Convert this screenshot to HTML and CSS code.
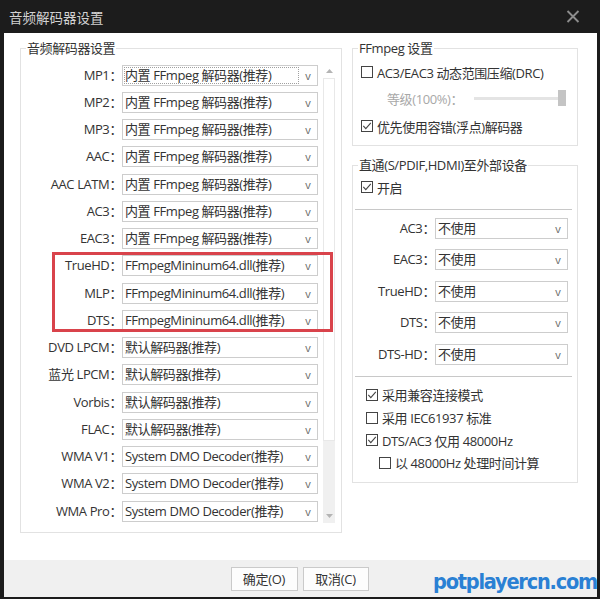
FILE: index.html
```html
<!DOCTYPE html>
<html lang="zh-CN">
<head>
<meta charset="utf-8">
<title>音频解码器设置</title>
<link rel="stylesheet" href="styles.css">
</head>
<body>
<div class="window">
  <div class="titlebar">
    <span class="title">音频解码器设置</span>
    <svg class="close" width="14" height="13" viewBox="0 0 14 13"><path d="M1.5 1 L12.5 12 M12.5 1 L1.5 12" stroke="#8c8c8c" stroke-width="1.9" fill="none"/></svg>
  </div>
  <div class="client">
    <div class="main">
      <fieldset class="group left-group">
        <legend>音频解码器设置</legend>
        <div class="list">
          <div class="rows">
            <div class="row"><span class="lbl">MP1：</span><div class="select focus"><span class="val">内置 FFmpeg 解码器(推荐)</span><span class="arrow">v</span></div></div>
            <div class="row"><span class="lbl">MP2：</span><div class="select"><span class="val">内置 FFmpeg 解码器(推荐)</span><span class="arrow">v</span></div></div>
            <div class="row"><span class="lbl">MP3：</span><div class="select"><span class="val">内置 FFmpeg 解码器(推荐)</span><span class="arrow">v</span></div></div>
            <div class="row"><span class="lbl">AAC：</span><div class="select"><span class="val">内置 FFmpeg 解码器(推荐)</span><span class="arrow">v</span></div></div>
            <div class="row"><span class="lbl">AAC LATM：</span><div class="select"><span class="val">内置 FFmpeg 解码器(推荐)</span><span class="arrow">v</span></div></div>
            <div class="row"><span class="lbl">AC3：</span><div class="select"><span class="val">内置 FFmpeg 解码器(推荐)</span><span class="arrow">v</span></div></div>
            <div class="row"><span class="lbl">EAC3：</span><div class="select"><span class="val">内置 FFmpeg 解码器(推荐)</span><span class="arrow">v</span></div></div>
            <div class="row"><span class="lbl">TrueHD：</span><div class="select"><span class="val">FFmpegMininum64.dll(推荐)</span><span class="arrow">v</span></div></div>
            <div class="row"><span class="lbl">MLP：</span><div class="select"><span class="val">FFmpegMininum64.dll(推荐)</span><span class="arrow">v</span></div></div>
            <div class="row"><span class="lbl">DTS：</span><div class="select"><span class="val">FFmpegMininum64.dll(推荐)</span><span class="arrow">v</span></div></div>
            <div class="row"><span class="lbl">DVD LPCM：</span><div class="select"><span class="val">默认解码器(推荐)</span><span class="arrow">v</span></div></div>
            <div class="row"><span class="lbl">蓝光 LPCM：</span><div class="select"><span class="val">默认解码器(推荐)</span><span class="arrow">v</span></div></div>
            <div class="row"><span class="lbl">Vorbis：</span><div class="select"><span class="val">默认解码器(推荐)</span><span class="arrow">v</span></div></div>
            <div class="row"><span class="lbl">FLAC：</span><div class="select"><span class="val">默认解码器(推荐)</span><span class="arrow">v</span></div></div>
            <div class="row"><span class="lbl">WMA V1：</span><div class="select"><span class="val">System DMO Decoder(推荐)</span><span class="arrow">v</span></div></div>
            <div class="row"><span class="lbl">WMA V2：</span><div class="select"><span class="val">System DMO Decoder(推荐)</span><span class="arrow">v</span></div></div>
            <div class="row"><span class="lbl">WMA Pro：</span><div class="select"><span class="val">System DMO Decoder(推荐)</span><span class="arrow">v</span></div></div>
          </div>
          <div class="scrollbar">
            <div class="sb-btn sb-up"><svg width="7" height="4" viewBox="0 0 7 4"><path d="M0 4 L3.5 0 L7 4 Z" fill="#b4b4b4"/></svg></div>
            <div class="sb-thumb"></div>
            <div class="sb-track"></div>
            <div class="sb-btn sb-down"><svg width="7" height="4" viewBox="0 0 7 4"><path d="M0 0 L3.5 4 L7 0 Z" fill="#b4b4b4"/></svg></div>
          </div>
          <div class="highlight"></div>
        </div>
      </fieldset>

      <div class="right">
        <fieldset class="group ffmpeg">
          <legend>FFmpeg 设置</legend>
          <div class="chk-row r1">
            <svg class="cb" width="12" height="12" viewBox="0 0 12 12"><rect x="0.5" y="0.5" width="11" height="11" fill="#fff" stroke="#444"/></svg>
            <span>AC3/EAC3 动态范围压缩(DRC)</span>
          </div>
          <div class="slider-row">
            <span class="dim">等级(100%)：</span>
            <div class="slider"><div class="track"></div><div class="thumb"></div></div>
          </div>
          <div class="chk-row r3">
            <svg class="cb" width="12" height="12" viewBox="0 0 12 12"><rect x="0.5" y="0.5" width="11" height="11" fill="#fff" stroke="#444"/><path d="M2.3 5.8 L4.8 8.6 L9.8 2.8" stroke="#444" stroke-width="1.1" fill="none"/></svg>
            <span>优先使用容错(浮点)解码器</span>
          </div>
        </fieldset>

        <fieldset class="group pass">
          <legend>直通(S/PDIF,HDMI)至外部设备</legend>
          <div class="chk-row on-row">
            <svg class="cb" width="12" height="12" viewBox="0 0 12 12"><rect x="0.5" y="0.5" width="11" height="11" fill="#fff" stroke="#444"/><path d="M2.3 5.8 L4.8 8.6 L9.8 2.8" stroke="#444" stroke-width="1.1" fill="none"/></svg>
            <span>开启</span>
          </div>
          <div class="sep"></div>
          <div class="sel-rows">
            <div class="prow"><span class="plbl">AC3：</span><div class="select"><span class="val">不使用</span><span class="arrow">v</span></div></div>
            <div class="prow"><span class="plbl">EAC3：</span><div class="select"><span class="val">不使用</span><span class="arrow">v</span></div></div>
            <div class="prow"><span class="plbl">TrueHD：</span><div class="select"><span class="val">不使用</span><span class="arrow">v</span></div></div>
            <div class="prow"><span class="plbl">DTS：</span><div class="select"><span class="val">不使用</span><span class="arrow">v</span></div></div>
            <div class="prow"><span class="plbl">DTS-HD：</span><div class="select"><span class="val">不使用</span><span class="arrow">v</span></div></div>
          </div>
          <div class="sep sep2"></div>
          <div class="opts">
            <div class="opt">
              <svg class="cb" width="12" height="12" viewBox="0 0 12 12"><rect x="0.5" y="0.5" width="11" height="11" fill="#fff" stroke="#444"/><path d="M2.3 5.8 L4.8 8.6 L9.8 2.8" stroke="#444" stroke-width="1.1" fill="none"/></svg>
              <span>采用兼容连接模式</span>
            </div>
            <div class="opt">
              <svg class="cb" width="12" height="12" viewBox="0 0 12 12"><rect x="0.5" y="0.5" width="11" height="11" fill="#fff" stroke="#444"/></svg>
              <span>采用 IEC61937 标准</span>
            </div>
            <div class="opt">
              <svg class="cb" width="12" height="12" viewBox="0 0 12 12"><rect x="0.5" y="0.5" width="11" height="11" fill="#fff" stroke="#444"/><path d="M2.3 5.8 L4.8 8.6 L9.8 2.8" stroke="#444" stroke-width="1.1" fill="none"/></svg>
              <span>DTS/AC3 仅用 48000Hz</span>
            </div>
            <div class="opt indent">
              <svg class="cb" width="12" height="12" viewBox="0 0 12 12"><rect x="0.5" y="0.5" width="11" height="11" fill="#fff" stroke="#444"/></svg>
              <span>以 48000Hz 处理时间计算</span>
            </div>
          </div>
        </fieldset>
      </div>
    </div>
    <div class="footer">
      <button class="btn btn-ok">确定(O)</button>
      <button class="btn btn-cancel">取消(C)</button>
      <span class="watermark">potplayercn.com</span>
    </div>
  </div>
</div>
</body>
</html>
```

FILE: styles.css
```css
* { box-sizing: border-box; }
html, body { margin: 0; padding: 0; }
body {
  width: 600px;
  height: 599px;
  overflow: hidden;
  background: #1c1c1c;
  font-family: "Open Sans", "Noto Sans CJK SC", sans-serif;
  font-size: 13px;
  letter-spacing: -0.4px;
  color: #333;
}
.window {
  width: 600px;
  height: 599px;
  display: flex;
  flex-direction: column;
  background: #1c1c1c;
}
.titlebar {
  height: 33px;
  flex: none;
  display: flex;
  align-items: center;
  justify-content: space-between;
  padding: 0 20px 0 9px;
}
.title {
  color: #d2d2d2;
  font-family: "Noto Sans CJK SC", sans-serif;
  font-size: 13.5px;
  letter-spacing: 0;
  line-height: 18px;
}
.close { display: block; }
.client {
  flex: 1;
  min-height: 0;
  margin: 0 3px 2px 4px;
  background: #fff;
  display: flex;
  flex-direction: column;
}
.main {
  flex: 1;
  display: flex;
  align-items: flex-start;
  gap: 10px;
  padding: 6.5px 0 0 16px;
}
.group {
  margin: 0;
  border: 1px solid #e2e2e2;
  padding: 0;
  min-width: 0;
}
.group legend {
  margin-left: 5px;
  padding: 0 1px;
  line-height: 17px;
  color: #333;
}
.left-group {
  width: 322px;
  padding: 5px 6px 7.25px 0;
}
.list {
  display: flex;
  position: relative;
}
.rows { width: 297px; flex: none; }
.row {
  height: 27.25px;
  display: flex;
  align-items: center;
}
.lbl {
  width: 101px;
  flex: none;
  text-align: right;
  white-space: nowrap;
  line-height: 17px;
}
.select {
  height: 21px;
  border: 1px solid #cdcdcd;
  background: #fff;
  display: flex;
  align-items: center;
  flex: none;
}
.row .select { width: 196px; }
.val {
  flex: 1;
  min-width: 0;
  padding-left: 2px;
  white-space: nowrap;
  overflow: hidden;
  line-height: 17px;
  color: #333;
}
.focus .val {
  flex: none;
  width: 175px;
  height: 17px;
  margin-left: 1px;
  padding-left: 0;
  border: 1px dotted #a0a0a0;
  line-height: 15px;
}
.arrow {
  width: 16px;
  margin-left: auto;
  margin-right: 1px;
  text-align: center;
  font-size: 11px;
  letter-spacing: 0;
  line-height: 17px;
  color: #666;
}
.scrollbar {
  width: 12px;
  flex: none;
  margin-left: 5px;
  margin-top: 2.5px;
  height: 459px;
  display: flex;
  flex-direction: column;
  background: #f0f0f0;
}
.sb-btn {
  height: 14px;
  flex: none;
  display: flex;
  align-items: center;
  justify-content: center;
}
.sb-up { background: #fff; }
.sb-btn svg { display: block; }
.sb-thumb {
  height: 363px;
  flex: none;
  background: #fff;
  border: 1px solid #e8e8e8;
}
.sb-track { flex: 1; }
.highlight {
  position: absolute;
  left: 31px;
  top: 190.5px;
  width: 281px;
  height: 80px;
  border: 3px solid #d9434b;
  pointer-events: none;
}
.right {
  width: 226px;
  flex: none;
  display: flex;
  flex-direction: column;
  gap: 10.5px;
}
.ffmpeg { padding: 3.5px 0 5px 0; }
.ffmpeg .chk-row { padding-left: 8px; }
.chk-row {
  display: flex;
  align-items: center;
  gap: 4px;
  white-space: nowrap;
}
.cb { display: block; flex: none; }
.r1 { height: 24px; }
.r3 { height: 28px; }
.slider-row {
  height: 28px;
  display: flex;
  align-items: center;
  padding-left: 34px;
}
.dim { color: #a8a8a8; }
.slider {
  width: 92px;
  margin-left: auto;
  margin-right: 11px;
  display: flex;
  align-items: center;
}
.track {
  flex: 1;
  height: 3px;
  background: #e4e4e4;
}
.thumb {
  width: 8px;
  height: 16px;
  background: #c4c4c4;
}
.pass { padding: 2.5px 0 7.7px 0; }
.on-row {
  height: 22px;
  padding-left: 8px;
}
.sep {
  height: 1px;
  background: #c8c8c8;
  margin: 11px 5px 0 2px;
}
.sel-rows { margin-top: 2.25px; }
.prow {
  height: 31.5px;
  display: flex;
  align-items: center;
}
.plbl {
  width: 82px;
  flex: none;
  text-align: right;
  white-space: nowrap;
  line-height: 17px;
}
.prow .select { width: 133px; }
.sep2 { margin-top: 6.25px; }
.opts {
  margin-top: 6.67px;
  padding-left: 13px;
}
.opt {
  height: 22.67px;
  display: flex;
  align-items: center;
  gap: 4px;
  white-space: nowrap;
}
.opt.indent { padding-left: 13px; }
.footer {
  height: 37px;
  flex: none;
  background: #f0f0f0;
  display: flex;
  justify-content: center;
  align-items: center;
  gap: 5px;
  padding-right: 2px;
  position: relative;
}
.btn {
  height: 24px;
  width: 67px;
  padding: 0;
  border: 1px solid #cacaca;
  background: #fdfdfd;
  font-family: "Open Sans", "Noto Sans CJK SC", sans-serif;
  font-size: 13px;
  letter-spacing: -0.3px;
  color: #333;
  line-height: 20px;
  text-align: center;
}
.btn-cancel { width: 66px; }
.watermark {
  position: absolute;
  right: 0;
  bottom: 1px;
  font-family: "DejaVu Sans Condensed", "DejaVu Sans", sans-serif;
  font-stretch: condensed;
  font-weight: 700;
  font-size: 21.5px;
  letter-spacing: -1.2px;
  line-height: 28px;
  color: #2a80d4;
}
```
